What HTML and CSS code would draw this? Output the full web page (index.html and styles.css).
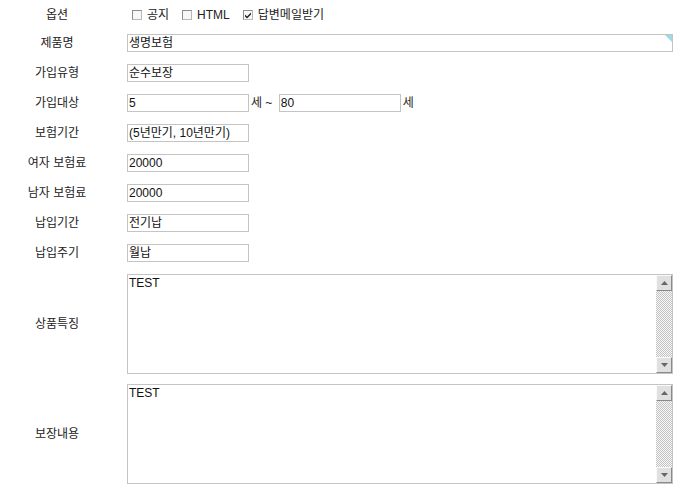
FILE: index.html
```html
<!DOCTYPE html>
<html lang="ko">
<head>
<meta charset="utf-8">
<title>상품 등록</title>
<link rel="stylesheet" href="styles.css">
</head>
<body>
<div class="form">
  <div class="row row-opt">
    <div class="lbl">옵션</div>
    <div class="field options">
      <label class="opt"><span class="cb"></span>공지</label>
      <label class="opt"><span class="cb"></span>HTML</label>
      <label class="opt"><span class="cb"><svg width="8" height="8" viewBox="0 0 8 8"><path d="M1 3.5 L3 5.5 L7 1.5 L7 3.5 L3 7.5 L1 5.5 Z" fill="#222"/></svg></span>답변메일받기</label>
    </div>
  </div>
  <div class="row">
    <div class="lbl">제품명</div>
    <div class="field"><span class="ime"><input class="inp wide" type="text" value="생명보험"></span></div>
  </div>
  <div class="row">
    <div class="lbl">가입유형</div>
    <div class="field"><input class="inp" type="text" value="순수보장"></div>
  </div>
  <div class="row">
    <div class="lbl">가입대상</div>
    <div class="field"><input class="inp" type="text" value="5"><span class="unit">세 ~ </span><input class="inp" type="text" value="80"><span class="unit">세</span></div>
  </div>
  <div class="row">
    <div class="lbl">보험기간</div>
    <div class="field"><input class="inp" type="text" value="(5년만기, 10년만기)"></div>
  </div>
  <div class="row">
    <div class="lbl">여자 보험료</div>
    <div class="field"><input class="inp" type="text" value="20000"></div>
  </div>
  <div class="row">
    <div class="lbl">남자 보험료</div>
    <div class="field"><input class="inp" type="text" value="20000"></div>
  </div>
  <div class="row">
    <div class="lbl">납입기간</div>
    <div class="field"><input class="inp" type="text" value="전기납"></div>
  </div>
  <div class="row">
    <div class="lbl">납입주기</div>
    <div class="field"><input class="inp" type="text" value="월납"></div>
  </div>
  <div class="row row-area">
    <div class="lbl">상품특징</div>
    <div class="field">
      <div class="area-wrap">
        <textarea class="area">TEST</textarea>
        <div class="sb" aria-hidden="true">
          <span class="sb-btn"><svg width="7" height="4" viewBox="0 0 7 4"><path d="M0 4 L3.5 0 L7 4 Z" fill="#666"/></svg></span>
          <span class="sb-track"></span>
          <span class="sb-btn"><svg width="7" height="4" viewBox="0 0 7 4"><path d="M0 0 L3.5 4 L7 0 Z" fill="#666"/></svg></span>
        </div>
      </div>
    </div>
  </div>
  <div class="row row-area row-area2">
    <div class="lbl">보장내용</div>
    <div class="field">
      <div class="area-wrap">
        <textarea class="area">TEST</textarea>
        <div class="sb" aria-hidden="true">
          <span class="sb-btn"><svg width="7" height="4" viewBox="0 0 7 4"><path d="M0 4 L3.5 0 L7 4 Z" fill="#666"/></svg></span>
          <span class="sb-track"></span>
          <span class="sb-btn"><svg width="7" height="4" viewBox="0 0 7 4"><path d="M0 0 L3.5 4 L7 0 Z" fill="#666"/></svg></span>
        </div>
      </div>
    </div>
  </div>
</div>
</body>
</html>
```
FILE: styles.css
```css
html, body {
  margin: 0;
  padding: 0;
  background: #fff;
}
body {
  font-family: "Liberation Sans", "Noto Sans CJK KR", sans-serif;
  font-size: 12px;
  color: #222;
}
.form {
  width: 673px;
  padding-top: 6px;
  display: flex;
  flex-direction: column;
}
.row {
  display: grid;
  grid-template-columns: 114px 1fr;
  column-gap: 13px;
  align-items: center;
  min-height: 18px;
}
.row + .row {
  margin-top: 12px;
}
.row-opt + .row {
  margin-top: 10px;
}
.row-area2 {
  margin-top: 10px !important;
}
.lbl {
  text-align: center;
  line-height: 18px;
  white-space: nowrap;
  color: #222;
}
.field {
  display: flex;
  align-items: center;
  line-height: 18px;
  color: #222;
}
.options {
  padding-left: 5px;
}
.opt {
  display: inline-flex;
  align-items: center;
  margin-right: 13px;
  color: #222;
}
.cb {
  box-sizing: border-box;
  width: 10px;
  height: 10px;
  border: 1px solid #8c8c8c;
  border-right-color: #b8b8b8;
  border-bottom-color: #b8b8b8;
  background: #f7f7f7;
  margin-right: 5px;
  display: inline-flex;
  align-items: center;
  justify-content: center;
}
.cb svg {
  display: block;
}
.inp {
  box-sizing: border-box;
  width: 122px;
  height: 18px;
  margin: 0;
  padding: 0 1px;
  border: 1px solid #c4c4c4;
  font: inherit;
  font-size: 12px;
  color: #111;
  background: #fff;
  outline: none;
}
.ime {
  position: relative;
  display: block;
  width: 100%;
}
.ime::after {
  content: "";
  position: absolute;
  top: 1px;
  right: 1px;
  width: 0;
  height: 0;
  border-top: 7px solid #9fd9e8;
  border-left: 7px solid transparent;
}
.wide {
  width: 100%;
  display: block;
}
.unit {
  padding: 0 3px 0 2px;
  white-space: pre;
  color: #222;
}
.area-wrap {
  position: relative;
  width: 100%;
  height: 100px;
}
.area {
  box-sizing: border-box;
  display: block;
  width: 100%;
  height: 100px;
  margin: 0;
  padding: 1px 18px 1px 1px;
  border: 1px solid #c4c4c4;
  font: inherit;
  font-size: 12px;
  line-height: 15px;
  color: #111;
  resize: none;
  outline: none;
  overflow: hidden;
}
.sb {
  position: absolute;
  top: 1px;
  right: 1px;
  bottom: 1px;
  width: 16px;
  display: flex;
  flex-direction: column;
}
.sb-btn {
  box-sizing: border-box;
  flex: 0 0 16px;
  height: 16px;
  background: #e0e0e0;
  border: 1px solid;
  border-color: #fafafa #8a8a8a #8a8a8a #fafafa;
  display: flex;
  align-items: center;
  justify-content: center;
}
.sb-btn svg {
  display: block;
}
.sb-track {
  flex: 1;
  background: repeating-conic-gradient(#c4c4c4 0 25%, #f6f6f6 0 50%) 0 0 / 2px 2px;
}
```
